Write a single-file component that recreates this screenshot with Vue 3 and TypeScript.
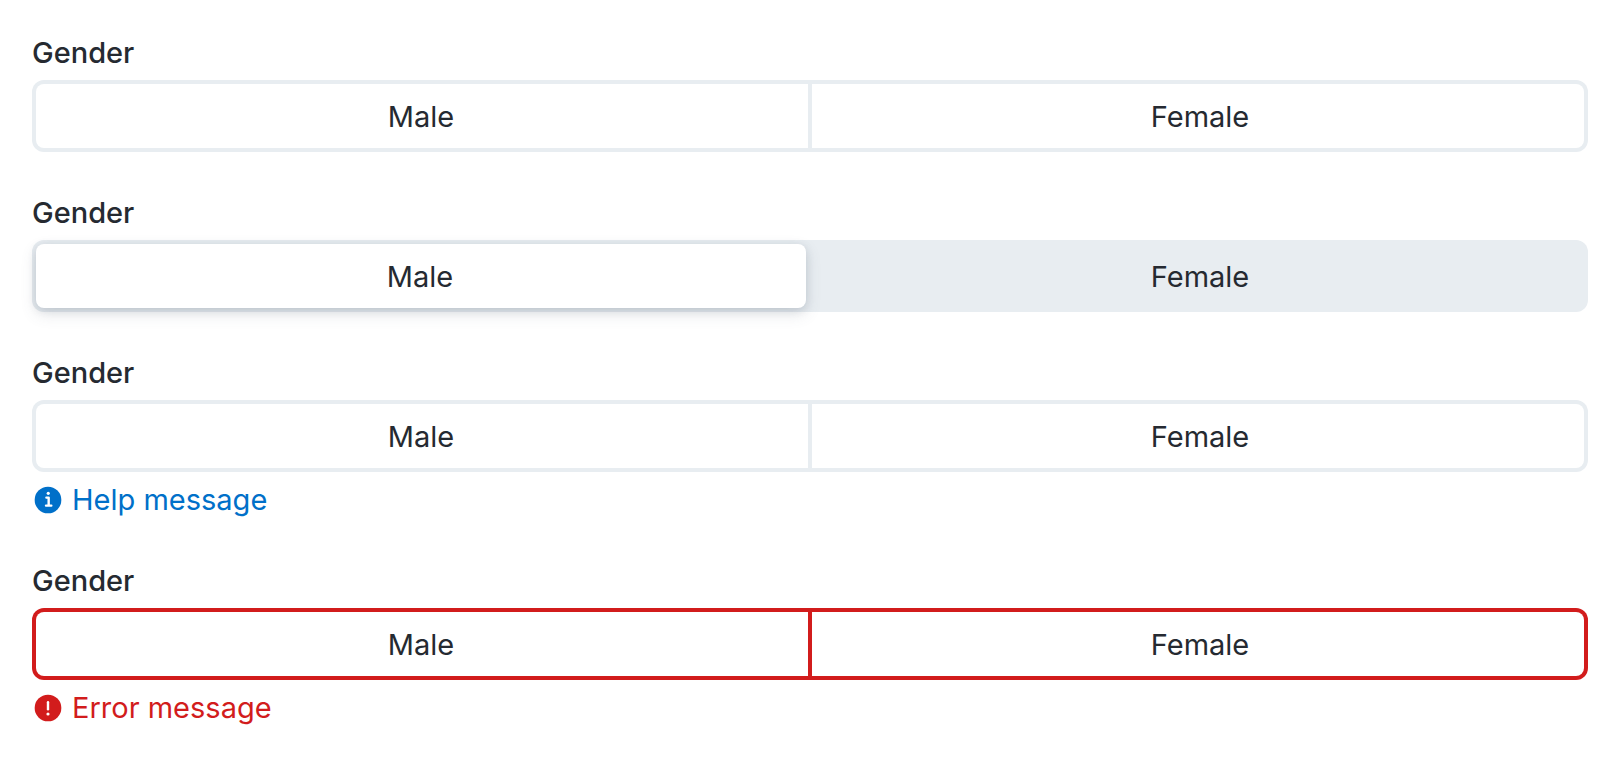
<script setup lang="ts">
type MessageKind = 'help' | 'error'

interface Field {
  id: string
  selected?: string
  kind?: MessageKind
  message?: string
}

const options: string[] = ['Male', 'Female']

const fields: Field[] = [
  { id: 'default' },
  { id: 'selected', selected: 'Male' },
  { id: 'help', kind: 'help', message: 'Help message' },
  { id: 'error', kind: 'error', message: 'Error message' },
]
</script>

<template>
  <main class="page">
    <fieldset
      v-for="field in fields"
      :key="field.id"
      class="field"
      :aria-describedby="field.message ? `${field.id}-message` : undefined"
    >
      <legend class="label">Gender</legend>
      <div class="switch" :class="{ filled: field.selected, invalid: field.kind === 'error' }">
        <label v-for="option in options" :key="option" class="segment">
          <input
            class="radio"
            type="radio"
            :name="`gender-${field.id}`"
            :value="option"
            :checked="field.selected === option"
          />
          <span class="text">{{ option }}</span>
        </label>
      </div>
      <p v-if="field.message" :id="`${field.id}-message`" class="message" :class="field.kind">
        <svg class="icon" viewBox="0 0 24 24" aria-hidden="true">
          <circle cx="12" cy="12" r="10" fill="currentColor" />
          <template v-if="field.kind === 'help'">
            <circle cx="12.2" cy="7" r="1.2" fill="#fff" />
            <path
              d="M10.8 10.2H12.5V16.1M10.5 16.2H14.5"
              fill="none"
              stroke="#fff"
              stroke-width="1.8"
              stroke-linecap="round"
              stroke-linejoin="round"
            />
          </template>
          <template v-else>
            <path d="M12 7.7V13" stroke="#fff" stroke-width="1.8" stroke-linecap="round" />
            <circle cx="12" cy="16.5" r="1.2" fill="#fff" />
          </template>
        </svg>
        <span>{{ field.message }}</span>
      </p>
    </fieldset>
  </main>
</template>

<style>
body {
  margin: 0;
  background: #fff;
}
</style>

<style scoped>
.page {
  display: flex;
  flex-direction: column;
  gap: 41px;
  padding: 33px 32px 32px;
  font-family: Inter, 'Liberation Sans', sans-serif;
  font-size: 29px;
  line-height: 40px;
  color: #252a31;
}

.field {
  min-width: 0;
  margin: 0;
  padding: 0;
  border: 0;
}

.label {
  margin-bottom: 7px;
  padding: 0;
  font-weight: 500;
}

.switch {
  --line: #e8edf1;
  display: flex;
  gap: 4px;
  padding: 4px;
  border-radius: 12px;
  background: var(--line);
}

.switch.invalid {
  --line: #d21c1c;
}

.segment {
  position: relative;
  display: flex;
  flex: 1;
  cursor: pointer;
}

.radio {
  position: absolute;
  inset: 0;
  width: 100%;
  height: 100%;
  margin: 0;
  opacity: 0;
  cursor: pointer;
}

.text {
  flex: 1;
  padding: 13px 12px 11px;
  background: #fff;
  text-align: center;
}

.segment:first-child .text {
  padding-right: 14px;
  border-radius: 8px 0 0 8px;
}

.segment:last-child .text {
  padding-left: 16px;
  border-radius: 0 8px 8px 0;
}

.filled .text {
  background: transparent;
}

.filled .radio:checked + .text {
  margin-right: 2px;
  border-radius: 8px;
  background: #fff;
  box-shadow: 0 2px 8px rgba(79, 94, 113, 0.16), 0 6px 16px rgba(79, 94, 113, 0.16);
}

.message {
  display: flex;
  align-items: center;
  gap: 8px;
  margin: 8px 0 0;
}

.help {
  color: #0070c9;
}

.error {
  color: #d21c1c;
}

.icon {
  flex: none;
  width: 32px;
  height: 32px;
}
</style>
